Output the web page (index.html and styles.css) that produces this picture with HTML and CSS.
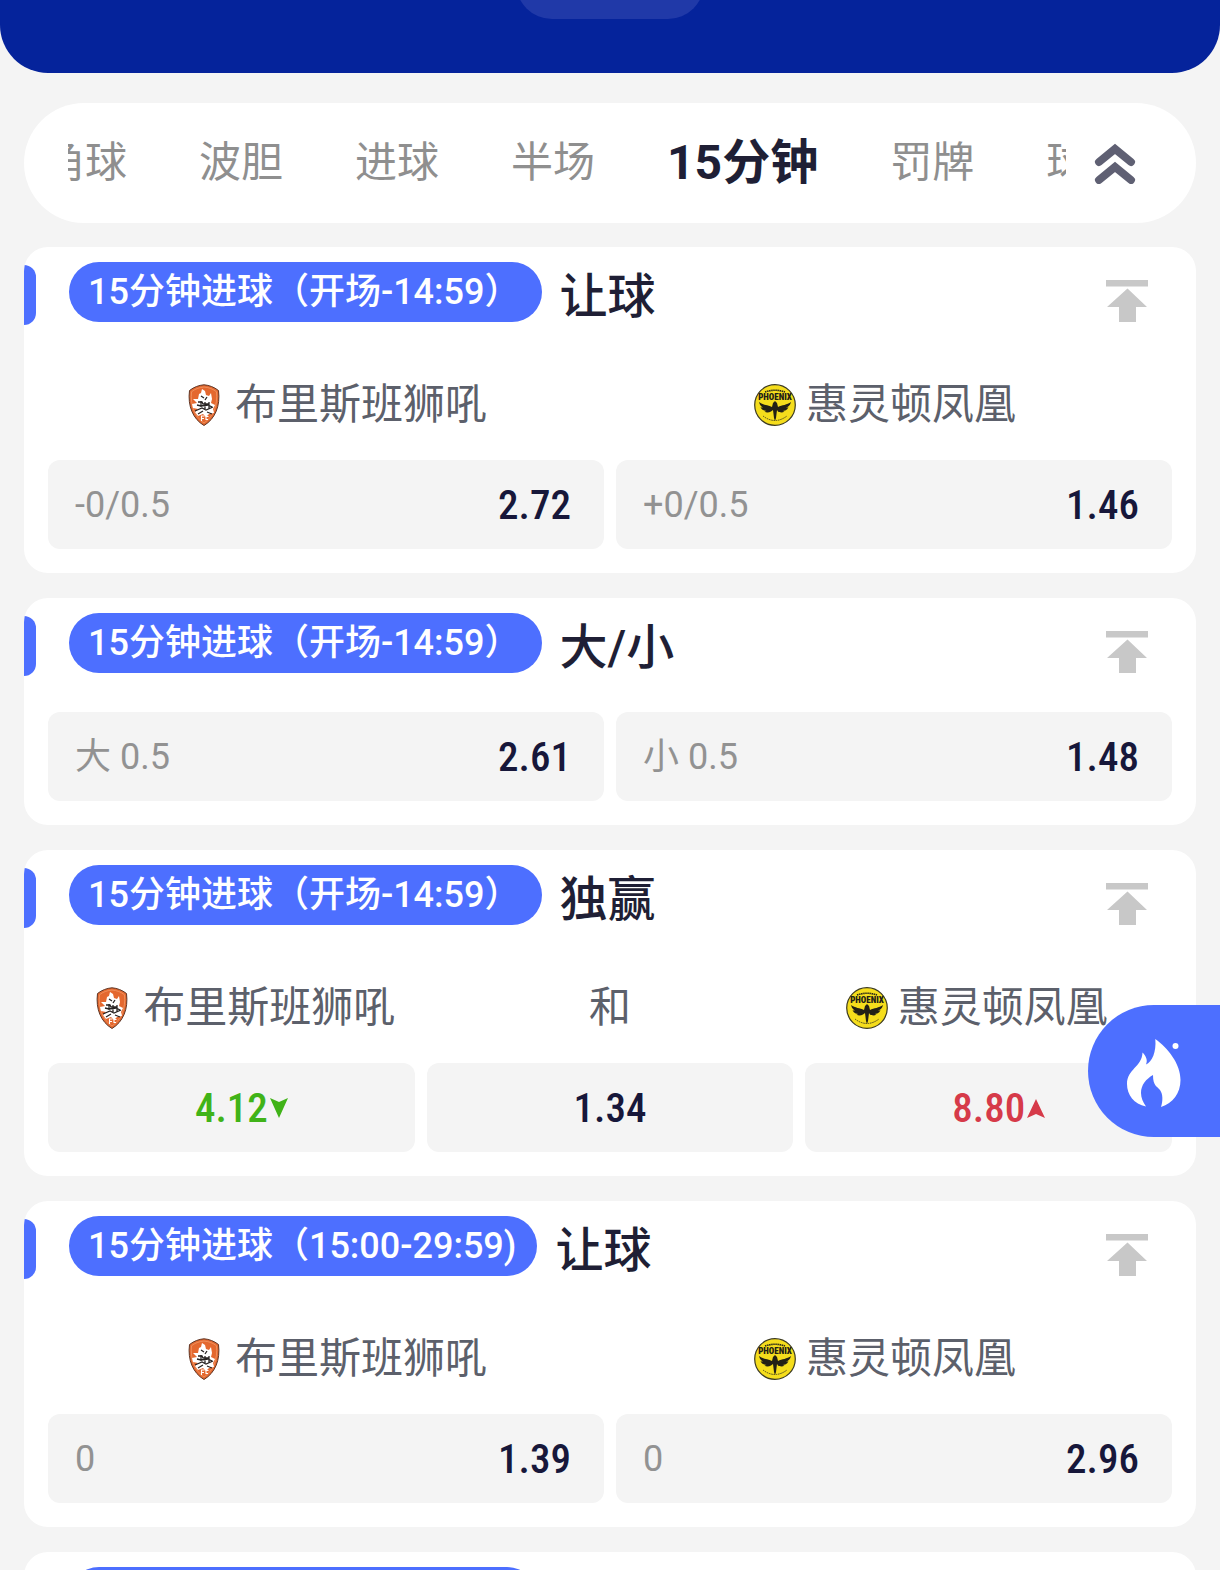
FILE: index.html
```html
<!DOCTYPE html>
<html lang="zh-CN">
<head>
    <meta charset="UTF-8">
    <meta name="viewport" content="width=device-width, initial-scale=1.0">
    <title>15分钟</title>
    <link rel="stylesheet" href="styles.css">
</head>
<body>
    <!-- Shared icons -->
    <svg class="sprite" aria-hidden="true">
        <symbol id="icon-top" viewBox="0 0 42 42">
            <path d="M0 0h42v6.500H0zM21.500 8.500 41 27H30v15H13V27H1z"/>
        </symbol>
        <symbol id="icon-roar" viewBox="0 0 42 42">
            <path d="M21 .8C26 1.200 31 3 35.500 6.500 37.500 22 32 35 21 41.500 10 35 4.500 22 6.500 6.500 11 3 16 1.200 21 .8z" fill="#e4682f" stroke="#5d3424" stroke-width="1"/>
            <path d="M21 3C26 3.500 30 5 33.500 7.800 34.800 21 30.500 32.500 21 39 11.500 32.500 7.200 21 8.500 7.800 12 5 16 3.500 21 3z" fill="none" stroke="#f2a070" stroke-width=".7"/>
            <path d="M19 5l3 2 1 4 3 1 2-3 1 6-1 4 4 2-2 4 1 4-5 1-3 3-3-3-5 2-3-4 3-3-5-1-1-4 5-1-4-4 5 0 1-5 2-1z" fill="#fff"/>
            <path d="M18 12l3 2M24 13l-2 3M15 18h4l1 2h6M14 21l4 1 7-1 4 2M12 27l7-3 4 2 7-3M15 30l5-3M24 28l5 2M22 18v8M18 17v6M26 18v7" fill="none" stroke="#272322" stroke-width="1.300"/>
            <path d="M18.500 37v-5h3M18.500 34.500h2.500M25.500 32.500h-2.500v3h2" fill="none" stroke="#fff" stroke-width="1.100"/>
        </symbol>
        <symbol id="icon-phoenix" viewBox="0 0 42 42">
            <circle cx="21" cy="21" r="20.300" fill="#f5dd1c" stroke="#3d3b20" stroke-width="1.200"/>
            <path d="M11 8Q21 4.500 31 8" fill="none" stroke="#27261a" stroke-width="1.600" stroke-dasharray="1.500 .6"/>
            <text class="crest-text" x="21" y="16">PHOENIX</text>
            <path d="M5 18c4 3 9 3 13 5l1-4 2-2 2 2 1 4c4-2 9-2 13-5-1 4-3 5-5 5.500 1 0 2 0 2.500-.5-1 3-4 4-6 4l2 .5c-2 1.500-5 1-6.500 0L23 26l-1 8-1 3-1-3-1-8-2 1.500c-2 1-4.500 1.500-6.500 0l2-.5c-2 0-5-1-6-4 .5.500 1.500.5 2.500.5C8 23 6 22 5 18z" fill="#222016"/>
            <path d="M9 32Q21 41 33 32" fill="none" stroke="#4d481c" stroke-width="1" stroke-dasharray="1.500 .8"/>
        </symbol>
    </svg>

    <div class="page">
        <header class="header">
            <div class="header-pill"></div>
        </header>

        <nav class="tabs">
            <div class="tabs-view">
                <div class="tabs-track">
                    <button class="tab" type="button">角球</button>
                    <button class="tab" type="button">波胆</button>
                    <button class="tab" type="button">进球</button>
                    <button class="tab" type="button">半场</button>
                    <button class="tab tab-active" type="button">15分钟</button>
                    <button class="tab" type="button">罚牌</button>
                    <button class="tab" type="button">球</button>
                </div>
            </div>
            <button class="collapse" type="button" aria-label="收起">
                <svg viewBox="0 0 42 42"><path d="M5 20 21 7l16 13M5 38l16-13 16 13"/></svg>
            </button>
        </nav>

        <main class="markets">
            <section class="card">
                <div class="card-head">
                    <span class="period">15分钟进球（开场-14:59）</span>
                    <h2 class="market">让球</h2>
                    <button class="to-top" type="button" aria-label="置顶"><svg><use href="#icon-top"/></svg></button>
                </div>
                <div class="teams">
                    <div class="team"><svg class="crest"><use href="#icon-roar"/></svg>布里斯班狮吼</div>
                    <div class="team"><svg class="crest"><use href="#icon-phoenix"/></svg>惠灵顿凤凰</div>
                </div>
                <div class="odds">
                    <button class="cell" type="button"><span class="line">-0/0.5</span><span class="price">2.72</span></button>
                    <button class="cell" type="button"><span class="line">+0/0.5</span><span class="price">1.46</span></button>
                </div>
            </section>

            <section class="card">
                <div class="card-head">
                    <span class="period">15分钟进球（开场-14:59）</span>
                    <h2 class="market">大/小</h2>
                    <button class="to-top" type="button" aria-label="置顶"><svg><use href="#icon-top"/></svg></button>
                </div>
                <div class="odds">
                    <button class="cell" type="button"><span class="line">大 0.5</span><span class="price">2.61</span></button>
                    <button class="cell" type="button"><span class="line">小 0.5</span><span class="price">1.48</span></button>
                </div>
            </section>

            <section class="card">
                <div class="card-head">
                    <span class="period">15分钟进球（开场-14:59）</span>
                    <h2 class="market">独赢</h2>
                    <button class="to-top" type="button" aria-label="置顶"><svg><use href="#icon-top"/></svg></button>
                </div>
                <div class="teams">
                    <div class="team"><svg class="crest"><use href="#icon-roar"/></svg>布里斯班狮吼</div>
                    <div class="team">和</div>
                    <div class="team"><svg class="crest"><use href="#icon-phoenix"/></svg>惠灵顿凤凰</div>
                </div>
                <div class="odds odds-center">
                    <button class="cell" type="button"><span class="price price-down">4.12<svg class="trend" viewBox="0 0 18 20"><path d="M0 0 9 4l9-4-9 20z"/></svg></span></button>
                    <button class="cell" type="button"><span class="price">1.34</span></button>
                    <button class="cell" type="button"><span class="price price-up">8.80<svg class="trend" viewBox="0 0 18 20"><path d="M9 1l9 19-9-4-9 4z"/></svg></span></button>
                </div>
            </section>

            <section class="card">
                <div class="card-head">
                    <span class="period">15分钟进球（15:00-29:59)</span>
                    <h2 class="market">让球</h2>
                    <button class="to-top" type="button" aria-label="置顶"><svg><use href="#icon-top"/></svg></button>
                </div>
                <div class="teams">
                    <div class="team"><svg class="crest"><use href="#icon-roar"/></svg>布里斯班狮吼</div>
                    <div class="team"><svg class="crest"><use href="#icon-phoenix"/></svg>惠灵顿凤凰</div>
                </div>
                <div class="odds">
                    <button class="cell" type="button"><span class="line">0</span><span class="price">1.39</span></button>
                    <button class="cell" type="button"><span class="line">0</span><span class="price">2.96</span></button>
                </div>
            </section>

            <section class="card">
                <div class="card-head">
                    <span class="period">15分钟进球（15:00-29:59)</span>
                </div>
            </section>
        </main>

        <button class="hot" type="button" aria-label="热门">
            <svg viewBox="0 0 54 68">
                <path d="M28.300 0C41 9 53.500 25 53.500 41 53.500 54 46 64 34 68 36 62 36 55 33 51 30 47 26 47 26 36 19 40 14 46 14 54 14 59 16 63 19 67.500 7 65 0 56 0 45 0 30 15 28 15.500 13.500 19 17 21 21 19 25.500 25 23 29.500 13 28.300 0z"/>
                <circle cx="48.500" cy="7" r="3"/>
            </svg>
        </button>
    </div>
</body>
</html>
```

FILE: styles.css
```css
* {
    box-sizing: border-box;
}

body {
    margin: 0;
    background: #f4f4f4;
    font-family: Roboto, "Noto Sans CJK SC", sans-serif;
    color: #1f1f35;
}

button {
    margin: 0;
    padding: 0;
    border: none;
    background: none;
    font: inherit;
    color: inherit;
    cursor: pointer;
}

svg {
    display: block;
}

.sprite {
    position: absolute;
    width: 0;
    height: 0;
}

.page {
    height: 100vh;
    overflow: hidden;
}

/* Header */
.header {
    height: 73px;
    overflow: hidden;
    background: #05239b;
    border-radius: 0 0 48px 48px;
}

.header-pill {
    width: 188px;
    height: 72px;
    margin: -53px auto 0;
    border-radius: 36px;
    background: #2039a8;
}

/* Tabs */
.tabs {
    display: flex;
    align-items: center;
    gap: 28px;
    height: 120px;
    margin: 30px 24px 24px;
    padding: 0 60px 0 44px;
    border-radius: 60px;
    background: #fff;
}

.tabs-view {
    flex: 1;
    min-width: 0;
    overflow: hidden;
}

.tabs-track {
    display: flex;
    align-items: center;
    gap: 72px;
    margin-left: -25px;
}

.tab {
    flex: none;
    font-size: 42px;
    line-height: 72px;
    color: #8f8f8f;
}

.tab-active {
    font-size: 48px;
    font-weight: 700;
    color: #1f1f35;
}

.collapse svg {
    width: 42px;
    height: 42px;
    fill: none;
    stroke: #5f6073;
    stroke-width: 8;
    stroke-linecap: round;
}

/* Market cards */
.markets {
    display: flex;
    flex-direction: column;
    gap: 25px;
    padding: 0 24px;
}

.card {
    position: relative;
    overflow: hidden;
    flex: none;
    padding-bottom: 24px;
    border-radius: 24px;
    background: #fff;
}

.card::before {
    content: "";
    position: absolute;
    top: 18px;
    left: 0;
    width: 12px;
    height: 60px;
    border-radius: 0 12px 12px 0;
    background: #4d6fff;
}

.card-head {
    display: flex;
    align-items: flex-start;
    height: 114px;
    padding: 15px 48px 0 45px;
}

.period {
    padding: 0 21px 0 19px;
    border-radius: 30px;
    background: #4d6fff;
    color: #fff;
    font-size: 36px;
    font-weight: 500;
    line-height: 60px;
    white-space: nowrap;
}

.market {
    flex: 1;
    margin: 0 0 0 18px;
    font-size: 48px;
    font-weight: 500;
    line-height: 70px;
}

.to-top {
    margin-top: 18px;
}

.to-top svg {
    width: 42px;
    height: 42px;
    fill: #c8c8c8;
}

.teams {
    display: flex;
    padding: 14px 36px 25px;
}

.team {
    flex: 1;
    display: flex;
    align-items: center;
    justify-content: center;
    gap: 10px;
    font-size: 42px;
    line-height: 60px;
    color: #5c606b;
    white-space: nowrap;
}

.crest {
    width: 42px;
    height: 42px;
}

.crest-text {
    font-family: "Roboto Condensed", Roboto, sans-serif;
    font-size: 9px;
    font-weight: 900;
    text-anchor: middle;
    fill: #222016;
}

/* Odds */
.odds {
    display: flex;
    gap: 12px;
    padding: 0 24px;
}

.cell {
    flex: 1;
    display: flex;
    align-items: center;
    justify-content: space-between;
    height: 89px;
    padding: 0 33px 0 27px;
    border-radius: 12px;
    background: #f4f4f4;
}

.odds-center .cell {
    justify-content: center;
    padding: 0;
}

.line {
    font-size: 36px;
    line-height: 42px;
    color: #929292;
}

.price {
    position: relative;
    font-family: "Roboto Condensed", Roboto, sans-serif;
    font-size: 41px;
    font-weight: 500;
    line-height: 48px;
    color: #17173a;
}

.price-down {
    color: #40b318;
}

.price-up {
    color: #d63a49;
}

.trend {
    position: absolute;
    top: 50%;
    left: 100%;
    width: 18px;
    height: 20px;
    margin: -10px 0 0 2px;
    fill: currentColor;
}

/* Floating hot button */
.hot {
    position: fixed;
    top: 1005px;
    right: 0;
    width: 132px;
    height: 132px;
    padding: 4px 0 0 39px;
    border-radius: 66px 0 0 66px;
    background: #4d6fff;
}

.hot svg {
    width: 54px;
    height: 68px;
    fill: #fff;
}
```
